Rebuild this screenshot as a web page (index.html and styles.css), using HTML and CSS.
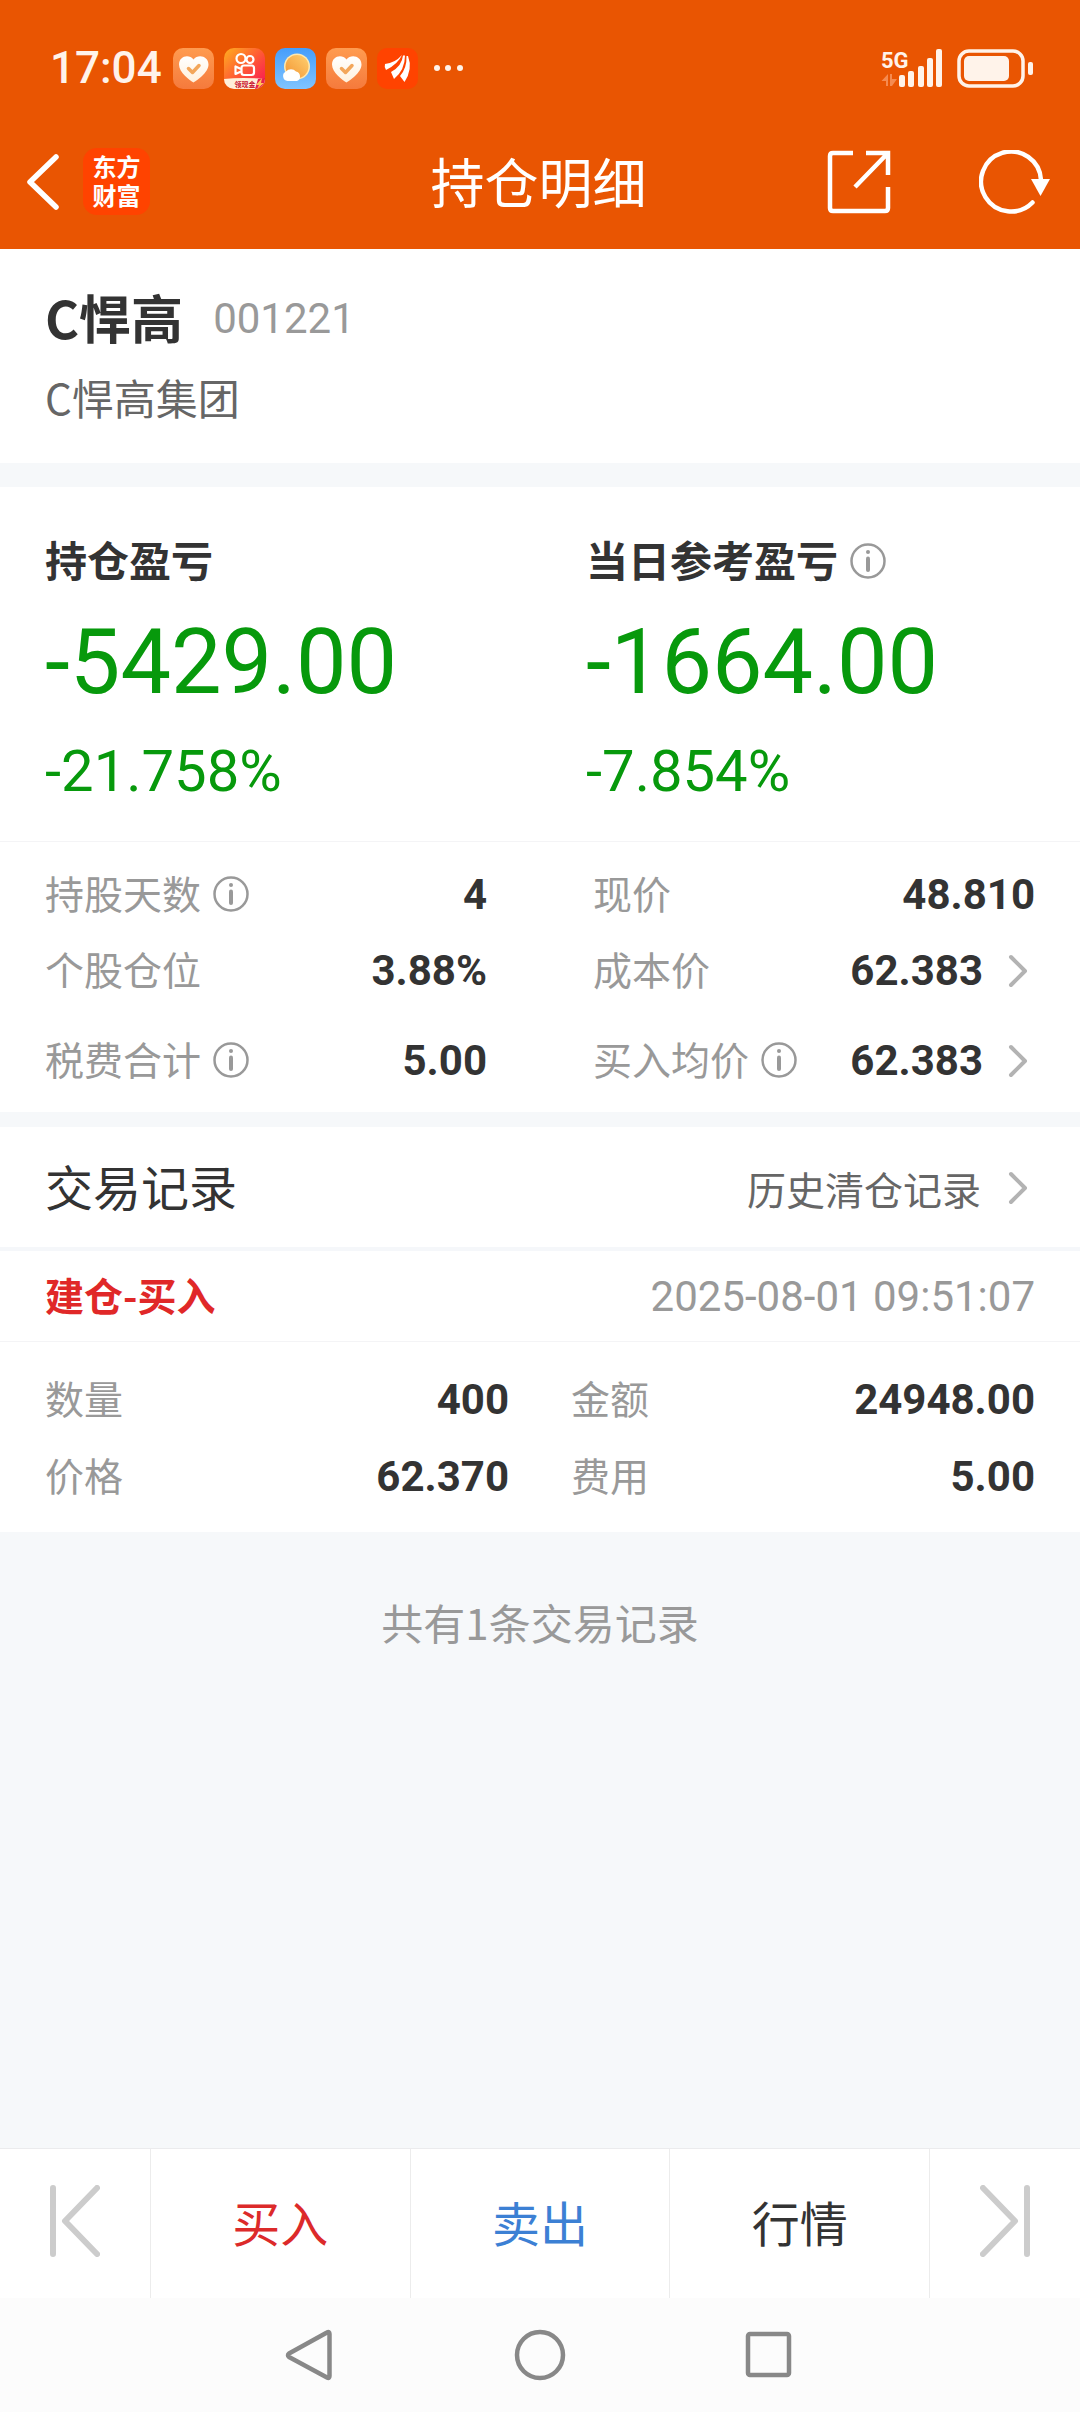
FILE: index.html
```
<!DOCTYPE html>
<html lang="zh-CN">
<head>
  <meta charset="UTF-8" />
  <meta name="viewport" content="width=device-width, initial-scale=1.0"/>
  <title>持仓明细</title>
  <link rel="stylesheet" href="styles.css">
</head>
<body>
  <svg class="defs" aria-hidden="true">
    <defs>
      <linearGradient id="peach" x1="0" y1="0" x2="0" y2="1">
        <stop offset="0" stop-color="#ff9b50"/>
        <stop offset="1" stop-color="#f57a3c"/>
      </linearGradient>
      <linearGradient id="heartFill" x1="0" y1="0" x2="0" y2="1">
        <stop offset="0" stop-color="#ffffff"/>
        <stop offset="1" stop-color="#fff0dc"/>
      </linearGradient>
      <linearGradient id="video" x1="0" y1="0" x2="1" y2="1">
        <stop offset="0" stop-color="#ffb01f"/>
        <stop offset="0.5" stop-color="#ff5a34"/>
        <stop offset="1" stop-color="#f8105a"/>
      </linearGradient>
      <linearGradient id="sky" x1="0" y1="0" x2="0" y2="1">
        <stop offset="0" stop-color="#459dfb"/>
        <stop offset="1" stop-color="#80c4ff"/>
      </linearGradient>
      <linearGradient id="sun" x1="1" y1="0" x2="0" y2="1">
        <stop offset="0" stop-color="#ffd070"/>
        <stop offset="1" stop-color="#f39432"/>
      </linearGradient>
      <clipPath id="tile"><rect width="41" height="41" rx="10"/></clipPath>
    </defs>
    <symbol id="heart" viewBox="0 0 41 41">
      <rect width="41" height="41" rx="10" fill="url(#peach)"/>
      <path d="M20.500 34.500C17 32.500 6 24.500 6 16.500C6 8 16 5.500 20.500 11.500C25 5.500 35.500 8 35.500 16.500C35.500 24.500 24 32.500 20.500 34.500Z" fill="url(#heartFill)"/>
      <path d="M15.500 20.500L19.500 24.500L26 17.500" fill="none" stroke="#f3a65a" stroke-width="3.500" stroke-linecap="round" stroke-linejoin="round"/>
    </symbol>
    <symbol id="info" viewBox="0 0 36 36">
      <circle cx="18" cy="18" r="16.500" fill="none" stroke="#999" stroke-width="2.500"/>
      <circle cx="18" cy="9" r="2" fill="#999"/>
      <path d="M18 15.500V27" stroke="#999" stroke-width="4" stroke-linecap="round"/>
    </symbol>
    <symbol id="arrow" viewBox="0 0 20 34">
      <path d="M3 3L17 17L3 31" fill="none" stroke="#b3b3b3" stroke-width="4" stroke-linecap="round" stroke-linejoin="round"/>
    </symbol>
    <symbol id="edge" viewBox="0 0 50 72">
      <path d="M3 3V69M47 3L15 36L47 69" fill="none" stroke="#ccc" stroke-width="6" stroke-linecap="round" stroke-linejoin="round"/>
    </symbol>
  </svg>

  <header class="header">
    <div class="status">
      <div class="status-left">
        <span class="time">17:04</span>
        <div class="apps">
          <svg class="app"><use href="#heart"/></svg>
          <svg class="app" viewBox="0 0 41 41">
            <g clip-path="url(#tile)">
              <rect width="41" height="41" fill="url(#video)"/>
              <path d="M0 31Q18 29 41 31V41H0Z" fill="#fff0d8"/>
              <path d="M34 31L41 30V41H31Z" fill="#e8204e"/>
              <path d="M38 30L32 37H35L33 41L40 35H37Z" fill="#ffc25a"/>
            </g>
            <g fill="none" stroke="#fff" stroke-width="2.200" stroke-linejoin="round">
              <circle cx="17" cy="10.500" r="4.500"/>
              <circle cx="26" cy="11.500" r="3.500"/>
              <rect x="17.500" y="17.500" width="12.500" height="9.500" rx="2.500"/>
              <path d="M17 21L11.500 18.500V26L17 23.500"/>
            </g>
            <text x="10.500" y="38.500" class="app-tag">领现金</text>
          </svg>
          <svg class="app" viewBox="0 0 41 41">
            <rect width="41" height="41" rx="10" fill="url(#sky)"/>
            <circle cx="22" cy="18.500" r="13" fill="#ffe9b0"/>
            <circle cx="22" cy="18.500" r="11.500" fill="url(#sun)"/>
            <path d="M12.500 33A5 5 0 0 1 11 23.500A6.500 6.500 0 0 1 21 23.500A5 5 0 0 1 22 33Z" fill="#fff"/>
          </svg>
          <svg class="app"><use href="#heart"/></svg>
          <svg class="app" viewBox="0 0 41 41">
            <rect width="41" height="41" rx="10" fill="#ff4300"/>
            <g fill="#fff">
              <path d="M8 16Q18 15 25 7Q21 16 9 22Q7 19 8 16Z"/>
              <path d="M26 7.500Q25 18 14 24L17 31Q28 22 28 7.500Z"/>
              <path d="M29.500 8Q30 20 23 28L27.500 34Q36 21 31 8Z"/>
            </g>
          </svg>
        </div>
        <svg class="dots" viewBox="0 0 30 8" fill="#fff3ea">
          <circle cx="4" cy="4" r="3"/><circle cx="15" cy="4" r="3"/><circle cx="27" cy="4" r="3"/>
        </svg>
      </div>
      <div class="status-right">
        <svg class="signal" viewBox="0 0 62 40" fill="#fff3ea">
          <text x="0" y="20" class="signal-text">5G</text>
          <path d="M7 26V38H5V33H0.500ZM9 26H11V31H16L11 38H9Z" fill="#f58b50"/>
          <rect x="18" y="27" width="6" height="12" rx="2"/>
          <rect x="27" y="23" width="6" height="16" rx="2"/>
          <rect x="37" y="18" width="6" height="21" rx="2"/>
          <rect x="46" y="10" width="6" height="29" rx="2"/>
          <rect x="55" y="1" width="6" height="38" rx="2"/>
        </svg>
        <svg class="battery" viewBox="0 0 76 40" fill="#fff3ea">
          <rect x="2" y="3" width="64" height="35" rx="10" fill="none" stroke="#fff3ea" stroke-width="3.500"/>
          <rect x="7" y="8" width="45" height="25" rx="5"/>
          <rect x="71" y="14" width="5" height="13" rx="2"/>
        </svg>
      </div>
    </div>
    <nav class="nav">
      <div class="nav-left">
        <button class="icon-btn" aria-label="返回">
          <svg width="34" height="56" viewBox="0 0 34 56"><path d="M30 3L4 28L30 53" fill="none" stroke="#fff" stroke-width="5.500" stroke-linecap="round" stroke-linejoin="round"/></svg>
        </button>
        <a class="brand" href="#">东方财富</a>
      </div>
      <h1 class="title">持仓明细</h1>
      <div class="nav-right">
        <button class="icon-btn" aria-label="分享">
          <svg width="64" height="64" viewBox="0 0 64 64" fill="none" stroke="#fff" stroke-width="4.500">
            <path d="M26 3H6Q3 3 3 6V58Q3 61 6 61H58Q61 61 61 58V37"/>
            <path d="M39 3H61V25M61 3L28 37"/>
          </svg>
        </button>
        <button class="icon-btn" aria-label="刷新">
          <svg width="72" height="64" viewBox="0 0 72 64">
            <path d="M62 30A30 30 0 1 0 53.500 52.500" fill="none" stroke="#fff" stroke-width="4.500" stroke-linecap="round"/>
            <path d="M52 29H71L61.500 46Z" fill="#fff"/>
          </svg>
        </button>
      </div>
    </nav>
  </header>

  <main class="main">
    <section class="stock">
      <div class="stock-name">
        <h2>C悍高</h2>
        <span class="code">001221</span>
      </div>
      <p class="company">C悍高集团</p>
    </section>

    <section class="profit">
      <div class="profit-item">
        <h3>持仓盈亏</h3>
        <p class="amount">-5429.00</p>
        <p class="percent">-21.758%</p>
      </div>
      <div class="profit-item">
        <h3>当日参考盈亏 <svg class="info"><use href="#info"/></svg></h3>
        <p class="amount">-1664.00</p>
        <p class="percent">-7.854%</p>
      </div>
    </section>

    <dl class="stats">
      <div class="item">
        <dt>持股天数 <svg class="info"><use href="#info"/></svg></dt>
        <dd>4</dd>
      </div>
      <div class="item">
        <dt>现价</dt>
        <dd>48.810</dd>
      </div>
      <div class="item">
        <dt>个股仓位</dt>
        <dd>3.88%</dd>
      </div>
      <div class="item">
        <dt>成本价</dt>
        <dd>62.383 <svg class="arrow"><use href="#arrow"/></svg></dd>
      </div>
      <div class="item">
        <dt>税费合计 <svg class="info"><use href="#info"/></svg></dt>
        <dd>5.00</dd>
      </div>
      <div class="item">
        <dt>买入均价 <svg class="info"><use href="#info"/></svg></dt>
        <dd>62.383 <svg class="arrow"><use href="#arrow"/></svg></dd>
      </div>
    </dl>

    <section class="records">
      <div class="records-head">
        <h2>交易记录</h2>
        <a href="#">历史清仓记录 <svg class="arrow"><use href="#arrow"/></svg></a>
      </div>
      <div class="record-title">
        <strong>建仓-买入</strong>
        <time datetime="2025-08-01T09:51:07">2025-08-01 09:51:07</time>
      </div>
      <dl class="record">
        <div class="item"><dt>数量</dt><dd>400</dd></div>
        <div class="item"><dt>金额</dt><dd>24948.00</dd></div>
        <div class="item"><dt>价格</dt><dd>62.370</dd></div>
        <div class="item"><dt>费用</dt><dd>5.00</dd></div>
      </dl>
    </section>

    <p class="total">共有1条交易记录</p>
  </main>

  <div class="actions">
    <button aria-label="上一个"><svg class="edge"><use href="#edge"/></svg></button>
    <button class="buy">买入</button>
    <button class="sell">卖出</button>
    <button>行情</button>
    <button aria-label="下一个"><svg class="edge flip"><use href="#edge"/></svg></button>
  </div>

  <div class="system-nav">
    <button class="icon-btn" aria-label="系统返回">
      <svg width="52" height="52" viewBox="0 0 52 52"><path d="M42 3.500Q44.500 2 44.500 5V47Q44.500 50 42 48.500L4 28Q2 26 4 24.500Z" fill="none" stroke="#888" stroke-width="4.500" stroke-linejoin="round"/></svg>
    </button>
    <button class="icon-btn" aria-label="主屏幕">
      <svg width="52" height="52" viewBox="0 0 52 52"><circle cx="26" cy="26" r="23" fill="none" stroke="#888" stroke-width="4.500"/></svg>
    </button>
    <button class="icon-btn" aria-label="最近任务">
      <svg width="52" height="52" viewBox="0 0 52 52"><rect x="5" y="5" width="41" height="41" rx="2" fill="none" stroke="#888" stroke-width="4.500"/></svg>
    </button>
  </div>
</body>
</html>
```
FILE: styles.css
```
* {
  box-sizing: border-box;
  margin: 0;
  padding: 0;
}

body {
  display: flex;
  flex-direction: column;
  min-height: 100vh;
  background-color: #f6f8fa;
  color: #333;
  font-family: "Noto Sans CJK SC", sans-serif;
  font-size: 42px;
  line-height: 60px;
}

svg {
  display: block;
  flex-shrink: 0;
}

a {
  color: inherit;
  text-decoration: none;
}

button {
  border: none;
  background: none;
  color: inherit;
  font: inherit;
  cursor: pointer;
}

.defs {
  position: absolute;
  width: 0;
  height: 0;
}

/* header */
.header {
  background-color: #e95502;
  color: white;
}

.status {
  display: flex;
  justify-content: space-between;
  align-items: center;
  height: 114px;
  padding: 22px 47px 0 50px;
}

.status-left,
.status-right,
.apps {
  display: flex;
  align-items: center;
}

.status-right {
  gap: 14px;
}

.time {
  margin-right: 11px;
  color: #fff3ea;
  font-family: Roboto, sans-serif;
  font-size: 44px;
  font-weight: 500;
}

.apps {
  gap: 10px;
}

.app {
  width: 41px;
  height: 41px;
}

.app-tag {
  fill: #c8102e;
  font-size: 7px;
  font-weight: bold;
}

.dots {
  width: 30px;
  height: 8px;
  margin-left: 15px;
}

.signal {
  width: 62px;
  height: 40px;
}

.signal-text {
  font-family: Roboto, sans-serif;
  font-size: 22px;
  font-weight: bold;
}

.battery {
  width: 76px;
  height: 40px;
}

.nav {
  display: grid;
  grid-template-columns: 1fr auto 1fr;
  align-items: center;
  height: 135px;
  padding: 0 29px 0 26px;
}

.nav-left {
  display: flex;
  align-items: center;
  gap: 23px;
}

.nav-right {
  display: flex;
  justify-content: flex-end;
  gap: 88px;
}

.brand {
  width: 67px;
  height: 67px;
  padding: 3px 8px;
  border-radius: 14px;
  background-color: #ff4300;
  font-size: 24px;
  font-weight: bold;
  line-height: 29px;
  text-align: center;
}

.title {
  padding-bottom: 2px;
  font-size: 54px;
  font-weight: normal;
  line-height: 72px;
}

/* stock */
.main {
  flex: 1;
}

.stock {
  padding: 32px 45px 36px;
  background-color: white;
}

.stock-name {
  display: flex;
  align-items: center;
  gap: 30px;
  height: 72px;
  margin-bottom: 14px;
}

.stock-name h2 {
  font-size: 52px;
}

.code {
  padding-top: 4px;
  color: #999;
  font-family: Roboto, sans-serif;
}

.company {
  color: #666;
}

/* profit */
.profit {
  display: grid;
  grid-template-columns: 1fr 1fr;
  gap: 92px;
  margin-top: 24px;
  padding: 44px 45px 34px;
  background-color: white;
}

.profit h3 {
  display: flex;
  align-items: center;
  gap: 12px;
  height: 60px;
  padding-bottom: 4px;
  font-size: 42px;
}

.info {
  width: 36px;
  height: 36px;
  margin-top: 4px;
}

.amount,
.percent {
  color: #07990c;
  font-family: Roboto, sans-serif;
  white-space: nowrap;
}

.amount {
  margin-top: 22px;
  font-size: 90px;
  line-height: 100px;
}

.percent {
  margin-top: 22px;
  font-size: 58px;
  line-height: 72px;
}

/* label and value pairs */
.stats,
.record {
  display: grid;
  grid-template-columns: 1fr 1fr;
  background-color: white;
}

.stats {
  grid-template-rows: 76px 76px 104px;
  column-gap: 106px;
  padding: 14px 45px 0;
  border-top: 1px solid #f4f4f6;
}

.item,
.item dt,
.item dd {
  display: flex;
  align-items: center;
}

.item {
  justify-content: space-between;
}

.item dt {
  gap: 12px;
  padding-bottom: 4px;
  color: #999;
  font-size: 39px;
}

.item dd {
  gap: 25px;
  padding-top: 2px;
  font-family: Roboto, sans-serif;
  font-weight: bold;
}

.arrow {
  width: 20px;
  height: 34px;
  margin-right: 7px;
}

/* records */
.records {
  margin-top: 15px;
  background-color: white;
}

.records-head,
.record-title {
  display: flex;
  justify-content: space-between;
  align-items: center;
  padding: 0 45px;
}

.records-head {
  height: 124px;
  border-bottom: 4px solid #f5f7fa;
}

.records-head h2 {
  padding-bottom: 4px;
  font-size: 48px;
  font-weight: normal;
}

.records-head a {
  display: flex;
  align-items: center;
  gap: 27px;
  padding-top: 2px;
  color: #666;
  font-size: 39px;
}

.record-title {
  height: 91px;
  border-bottom: 1px solid #f4f4f6;
}

.record-title strong {
  padding-bottom: 4px;
  color: #e02828;
  font-size: 39px;
}

.record-title time {
  padding-top: 2px;
  color: #999;
  font-family: Roboto, sans-serif;
}

.record {
  grid-auto-rows: 77px;
  column-gap: 62px;
  padding: 18px 45px;
}

.total {
  margin-top: 60px;
  color: #999;
  text-align: center;
}

/* bottom bars */
.actions {
  display: grid;
  grid-template-columns: 150px 1fr 1fr 1fr 151px;
  height: 150px;
  border-top: 1px solid #ebebed;
  background-color: white;
  font-size: 48px;
}

.actions button {
  display: flex;
  justify-content: center;
  align-items: center;
  padding-bottom: 5px;
}

.actions button + button {
  border-left: 1px solid #ececec;
}

.buy {
  color: #dc2a2a;
}

.sell {
  color: #3c80d4;
}

.edge {
  width: 50px;
  height: 72px;
}

.flip {
  transform: scaleX(-1);
}

.system-nav {
  display: flex;
  justify-content: center;
  align-items: center;
  gap: 177px;
  height: 114px;
  background-color: #fcfcfc;
}
```
